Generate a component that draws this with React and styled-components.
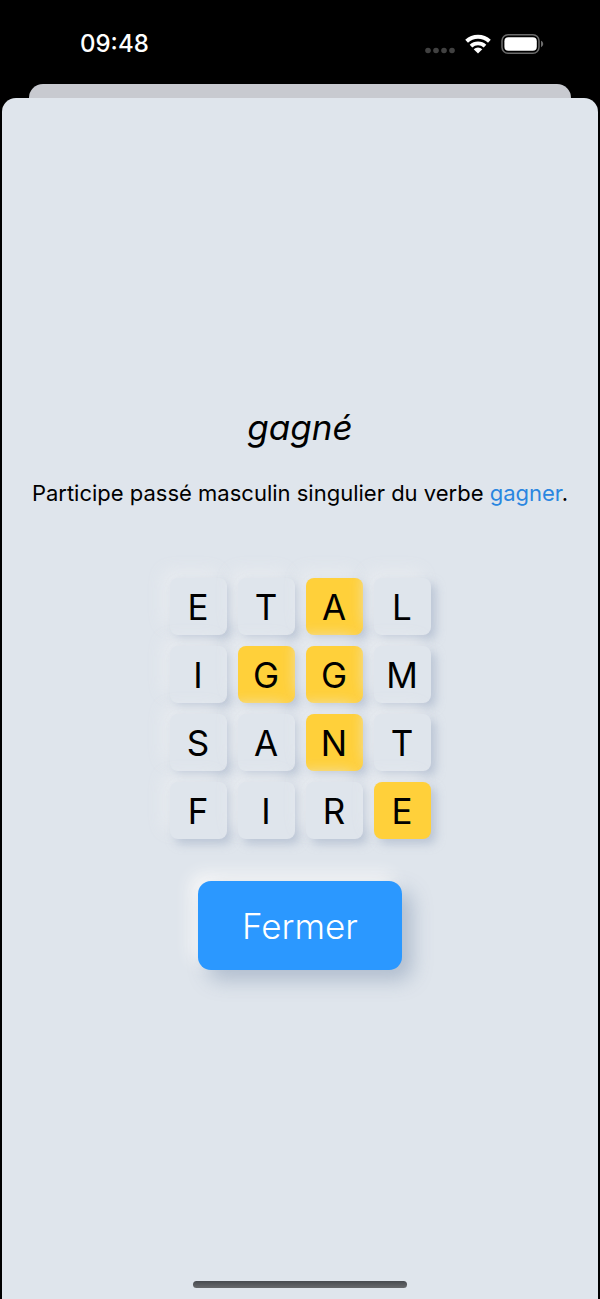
import React from 'react';
import styled, { createGlobalStyle } from 'styled-components';

const GlobalStyle = createGlobalStyle`
    * {
        box-sizing: border-box;
    }
    body {
        margin: 0;
        background: #000;
        font-family: Inter, 'Liberation Sans', sans-serif;
        color: #000;
    }
`;

const Screen = styled.div`
    display: flex;
    flex-direction: column;
    min-height: 100vh;
`;

const StatusBar = styled.header`
    display: flex;
    align-items: center;
    justify-content: space-between;
    height: 84px;
    padding: 4px 56px 0 80px;
    color: #fff;
`;

const Time = styled.time`
    font-size: 24px;
    line-height: 28px;
    font-weight: 500;
`;

const StatusIcons = styled.div`
    display: flex;
    align-items: center;
    gap: 10px;
`;

const BackCard = styled.div`
    height: 14px;
    margin: 0 29px;
    border-radius: 14px 14px 0 0;
    background: #c8cad0;
`;

const Sheet = styled.main`
    flex: 1;
    display: flex;
    flex-direction: column;
    margin: 0 2px;
    border-radius: 14px 14px 0 0;
    background: #dfe5ec;
`;

const Content = styled.div`
    flex: 1;
    display: flex;
    flex-direction: column;
    align-items: center;
    justify-content: center;
    padding: 24px 24px 30px;
`;

const Word = styled.h1`
    margin: 0 0 26px;
    font-size: 35px;
    line-height: 48px;
    font-weight: 400;
    font-style: italic;
`;

const Definition = styled.p`
    margin: 0 0 69px;
    font-size: 22px;
    line-height: 32px;
    text-align: center;
`;

const WordLink = styled.a`
    color: #2a86e0;
    text-decoration: none;
`;

const Grid = styled.div`
    display: grid;
    grid-template-columns: repeat(4, 57px);
    gap: 11px;
    margin-bottom: 42px;
`;

const Tile = styled.div`
    display: flex;
    align-items: center;
    justify-content: center;
    height: 57px;
    border-radius: 8px;
    background: ${({ $found }) => ($found ? '#ffd03a' : '#dfe5ec')};
    box-shadow: 5px 5px 10px rgba(163, 177, 198, 0.6), -8px -8px 15px rgba(232, 235, 239, 0.9);
    font-size: 35px;
    line-height: 40px;
`;

const CloseButton = styled.button`
    height: 89px;
    padding: 0 44px;
    border: 0;
    border-radius: 13px;
    background: #2b98ff;
    box-shadow: 10px 10px 20px rgba(163, 177, 198, 0.8), -7px -7px 16px rgba(248, 248, 248, 1);
    color: #fff;
    font-family: inherit;
    font-size: 35px;
    line-height: 44px;
    font-weight: 300;
    cursor: pointer;
`;

const HomeIndicator = styled.div`
    width: 214px;
    height: 7px;
    margin: 0 auto 11px;
    border-radius: 4px;
    background: linear-gradient(#484b50, #67696c);
`;

const rows = ['ETAL', 'IGGM', 'SANT', 'FIRE'];
const found = [2, 5, 6, 10, 15];

const SignalDots = () => (
    <svg width="30" height="20" viewBox="0 0 30 20" fill="#414141" aria-hidden="true">
        <circle cx="3" cy="16.5" r="2.8" />
        <circle cx="11" cy="16.5" r="2.8" />
        <circle cx="19" cy="16.5" r="2.8" />
        <circle cx="27" cy="16.5" r="2.8" />
    </svg>
);

const WifiIcon = () => (
    <svg width="26" height="20" viewBox="0 0 26 20" fill="none" stroke="#fff" strokeWidth="4" aria-hidden="true">
        <path d="M1.6 7.2a16.6 16.6 0 0 1 22.8 0" />
        <path d="M6 12.1a10.2 10.2 0 0 1 14 0" strokeWidth="3.8" />
        <path d="M13 19.6 8.7 15.3a6.2 6.2 0 0 1 8.6 0z" fill="#fff" stroke="none" />
    </svg>
);

const BatteryIcon = () => (
    <svg width="43" height="20" viewBox="0 0 43 20" aria-hidden="true">
        <rect x="1" y="0.8" width="37" height="18.4" rx="6" fill="none" stroke="#6b6b6b" strokeWidth="1.5" />
        <rect x="3.4" y="3.2" width="32.4" height="13.6" rx="4" fill="#fff" />
        <path d="M40 6.8c2.9 1.2 2.9 5.2 0 6.4z" fill="#6b6b6b" />
    </svg>
);

const App = () => {
    return (
        <>
            <GlobalStyle />
            <Screen>
                <StatusBar>
                    <Time>09:48</Time>
                    <StatusIcons>
                        <SignalDots />
                        <WifiIcon />
                        <BatteryIcon />
                    </StatusIcons>
                </StatusBar>
                <BackCard />
                <Sheet>
                    <Content>
                        <Word>gagné</Word>
                        <Definition>
                            Participe passé masculin singulier du verbe <WordLink href="#gagner">gagner</WordLink>.
                        </Definition>
                        <Grid>
                            {rows.join('').split('').map((letter, index) => (
                                <Tile key={index} $found={found.includes(index)}>{letter}</Tile>
                            ))}
                        </Grid>
                        <CloseButton type="button">Fermer</CloseButton>
                    </Content>
                    <HomeIndicator />
                </Sheet>
            </Screen>
        </>
    );
};

export default App;
